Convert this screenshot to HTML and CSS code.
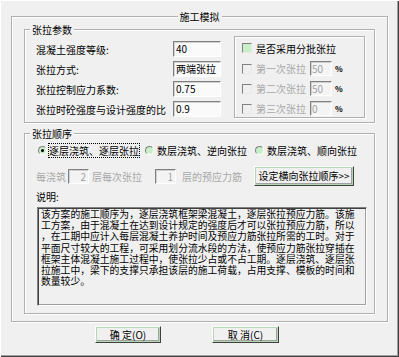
FILE: index.html
```html
<!DOCTYPE html>
<html lang="zh-CN">
<head>
    <meta charset="UTF-8">
    <title>施工模拟</title>
    <link rel="stylesheet" href="styles.css">
</head>
<body>
    <div class="window">
        <div class="frame frame-main">
            <div class="frame-title main-title"><span>施工模拟</span></div>

            <div class="frame frame-params">
                <div class="frame-title"><span>张拉参数</span></div>
                <div class="params-body">
                    <div class="fields">
                        <div class="field"><label>混凝土强度等级:</label><div class="box">40</div></div>
                        <div class="field"><label>张拉方式:</label><div class="box">两端张拉</div></div>
                        <div class="field"><label>张拉控制应力系数:</label><div class="box">0.75</div></div>
                        <div class="field"><label>张拉时砼强度与设计强度的比</label><div class="box">0.9</div></div>
                    </div>
                    <div class="frame batch">
                        <div class="check-row first"><span class="check on"></span><span>是否采用分批张拉</span></div>
                        <div class="check-row off"><span class="check"></span><span>第一次张拉</span><div class="box small">50</div><span class="pct">%</span></div>
                        <div class="check-row off"><span class="check"></span><span>第二次张拉</span><div class="box small">50</div><span class="pct">%</span></div>
                        <div class="check-row off"><span class="check"></span><span>第三次张拉</span><div class="box small">0</div><span class="pct">%</span></div>
                    </div>
                </div>
            </div>

            <div class="frame frame-order">
                <div class="frame-title"><span>张拉顺序</span></div>
                <div class="radios">
                    <div class="radio-item"><span class="radio checked"></span><span class="focus">逐层浇筑、逐层张拉</span></div>
                    <div class="radio-item second"><span class="radio"></span><span>数层浇筑、逆向张拉</span></div>
                    <div class="radio-item third"><span class="radio"></span><span>数层浇筑、顺向张拉</span></div>
                </div>
                <div class="layers">
                    <span class="muted">每浇筑</span>
                    <div class="box tiny first-box">2</div>
                    <span class="muted gap-a">层每次张拉</span>
                    <div class="box tiny second-box">1</div>
                    <span class="muted gap-b">层的预应力筋</span>
                    <button class="btn btn-order">设定横向张拉顺序&gt;&gt;</button>
                </div>
                <div class="note-label">说明:</div>
                <div class="note">该方案的施工顺序为，逐层浇筑框架梁混凝土，逐层张拉预应力筋。该施<br>工方案，由于混凝土在达到设计规定的强度后才可以张拉预应力筋，所以<br>，在工期中应计入每层混凝土养护时间及预应力筋张拉所需的工时。对于<br>平面尺寸较大的工程，可采用划分流水段的方法，使预应力筋张拉穿插在<br>框架主体混凝土施工过程中，使张拉少占或不占工期。逐层浇筑、逐层张<br>拉施工中，梁下的支撑只承担该层的施工荷载，占用支撑、模板的时间和<br>数量较少。</div>
            </div>
        </div>

        <div class="actions">
            <button class="btn btn-ok">确 定(O)</button>
            <button class="btn btn-cancel">取 消(C)</button>
        </div>
    </div>
</body>
</html>
```

FILE: styles.css
```css
body {
    margin: 0;
    background-color: #f0f0f0;
    font-family: "Noto Sans CJK SC", "Noto Sans", sans-serif;
    font-size: 10px;
    color: #000;
}
.window {
    width: 399px;
    height: 357px;
    box-sizing: border-box;
    padding: 16px 0 0 11px;
    box-shadow: inset 1px 1px 0 #fff, inset -1px -1px 0 #404040, inset -2px -2px 0 #a0a0a0;
}
.frame {
    box-sizing: border-box;
    border: 1px solid #b0b0b0;
    box-shadow: inset 1px 1px 0 #fff, 1px 1px 0 #fff;
}
.frame-main {
    width: 377px;
    height: 306px;
    padding: 0 12px;
}
.frame-title {
    height: 13px;
    line-height: 13px;
    margin-top: -7px;
    padding-left: 5px;
}
.frame-title span {
    background-color: #f0f0f0;
    padding: 0 2px;
}
.main-title {
    text-align: center;
    padding-left: 0;
}
.frame-params {
    margin-top: 6px;
    height: 94px;
}
.params-body {
    display: flex;
    align-items: flex-start;
    padding-left: 11px;
}
.fields {
    margin-top: 5px;
}
.field {
    display: flex;
    align-items: center;
    height: 16px;
    margin-bottom: 4px;
}
.field label {
    width: 137px;
    white-space: nowrap;
}
.box {
    box-sizing: border-box;
    height: 16px;
    border: 1px solid;
    border-color: #808080 #fff #fff #808080;
    box-shadow: inset 1px 1px 0 #d0d0d0;
    background-color: #fafafa;
    padding: 0 2px;
    line-height: 14px;
    white-space: nowrap;
    overflow: hidden;
}
.field .box {
    width: 48px;
}
.batch {
    margin-left: 13px;
    width: 131px;
    height: 82px;
    padding: 3px 0 0 7px;
}
.check-row {
    display: flex;
    align-items: center;
    height: 15px;
    margin-bottom: 5px;
    white-space: nowrap;
}
.check-row.first {
    height: 16px;
}
.check {
    box-sizing: border-box;
    width: 10px;
    height: 10px;
    margin-right: 4px;
    border: 1px solid;
    border-color: #808080 #e8e8e8 #e8e8e8 #808080;
    background-color: #f0f0f0;
}
.check.on {
    background-color: #c8efc8;
}
.off {
    color: #a8a8a8;
}
.box.small {
    width: 22px;
    height: 15px;
    margin-left: 4px;
    color: #a0a0a0;
    background-color: #f4f4f4;
    line-height: 13px;
    padding: 0 1px;
}
.pct {
    margin-left: 3px;
    color: #000;
    font-size: 8px;
    font-weight: bold;
}
.frame-order {
    margin-top: 10px;
    height: 181px;
}
.radios {
    display: flex;
    align-items: center;
    height: 16px;
    margin-top: 2px;
    padding-left: 13px;
    white-space: nowrap;
}
.radio-item {
    display: flex;
    align-items: center;
    gap: 3px;
}
.radio-item.second {
    margin-left: 5px;
}
.radio-item.third {
    margin-left: 8px;
}
.radio {
    box-sizing: border-box;
    width: 9px;
    height: 9px;
    border-radius: 50%;
    border: 1px solid;
    border-color: #808080 #fff #fff #808080;
    background-color: #c8efc8;
    display: flex;
    align-items: center;
    justify-content: center;
}
.radio.checked::after {
    content: "";
    width: 3px;
    height: 3px;
    border-radius: 50%;
    background-color: #000;
}
.radio-item:first-child {
    gap: 1px;
}
.focus {
    border: 1px dotted #000;
    line-height: 13px;
}
.layers {
    display: flex;
    align-items: center;
    height: 20px;
    margin-top: 8px;
    padding-left: 11px;
    white-space: nowrap;
}
.muted {
    color: #a8a8a8;
}
.box.tiny {
    width: 21px;
    height: 15px;
    line-height: 13px;
    text-align: right;
    color: #a0a0a0;
    background-color: #f4f4f4;
}
.first-box {
    margin-left: 2px;
}
.gap-a {
    margin-left: 3px;
}
.second-box {
    margin-left: 13px;
}
.gap-b {
    margin-left: 6px;
}
.btn {
    box-sizing: border-box;
    font-family: inherit;
    font-size: 10px;
    color: #000;
    background-color: #f0f0f0;
    border: 1px solid;
    border-color: #fff #404040 #404040 #fff;
    box-shadow: inset 0 0 0 1px #b4d8b4, inset -1px -1px 0 1px #a0a0a0;
    padding: 0;
    line-height: 1;
    white-space: nowrap;
}
.btn-order {
    width: 100px;
    height: 20px;
    margin-left: 12px;
}
.note-label {
    margin-top: 4px;
    padding-left: 11px;
    height: 13px;
    line-height: 13px;
}
.note {
    box-sizing: border-box;
    margin: 4px 0 0 12px;
    width: 330px;
    height: 99px;
    border: 1px solid;
    border-color: #808080 #fff #fff #808080;
    box-shadow: inset 1px 1px 0 #404040, inset -1px -1px 0 #a0a0a0;
    padding: 1px 2px 0 3px;
    font-size: 9.8px;
    line-height: 11.2px;
    white-space: nowrap;
    overflow: hidden;
}
.actions {
    display: flex;
    margin-top: 4px;
    padding-left: 84px;
    gap: 51px;
}
.btn-ok {
    width: 66px;
    height: 17px;
}
.btn-cancel {
    width: 67px;
    height: 17px;
}
```
